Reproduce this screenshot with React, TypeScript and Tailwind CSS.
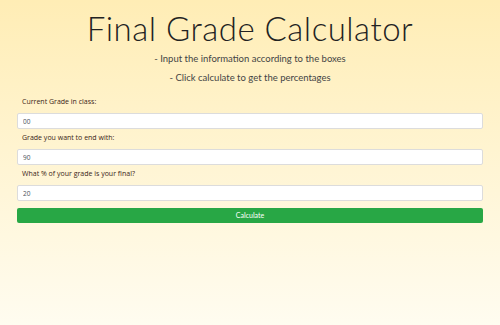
export default function App() {
  const fields = [
    { label: "Current Grade in class:", value: "00" },
    { label: "Grade you want to end with:", value: "90" },
    { label: "What % of your grade is your final?", value: "20" },
  ];

  return (
    <div className="w-[500px] h-[325px] bg-gradient-to-b from-[#ffedb5] to-[#fffcf0] font-['Open_Sans',sans-serif]">
      {/* Heading */}
      <div className="pt-[10px] text-center">
        <h1 className="text-[33px] leading-[36px] font-light tracking-[0.5px] text-[#222] font-['Lato',sans-serif]">
          Final Grade Calculator
        </h1>
        <p className="mt-[7px] text-[9.5px] leading-[12px] text-[#444] font-['Lato',sans-serif]">
          - Input the information according to the boxes
        </p>
        <p className="mt-[7px] text-[9.5px] leading-[12px] text-[#444] font-['Lato',sans-serif]">
          - Click calculate to get the percentages
        </p>
      </div>

      {/* Form */}
      <div className="px-[17px] mt-[13px] flex flex-col">
        {fields.map((f, i) => (
          <div key={i} className="flex flex-col">
            <label className="pl-[5px] text-[7px] leading-[10px] text-[#3a2416]">
              {f.label}
            </label>
            <input
              defaultValue={f.value}
              className="mt-[6px] mb-[4px] h-[16px] w-full bg-white border border-[#dcdcdc] rounded-[2px] px-[5px] text-[6.5px] text-[#495057] outline-none"
            />
          </div>
        ))}
        <button className="mt-[3px] h-[15px] w-full bg-[#28a745] rounded-[2px] text-white text-[7px] font-['Lato',sans-serif]">
          Calculate
        </button>
      </div>
    </div>
  );
}
